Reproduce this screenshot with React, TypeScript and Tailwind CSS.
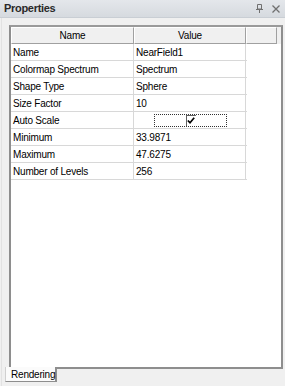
import React from "react";

const rows: [string, string][] = [
  ["Name", "NearField1"],
  ["Colormap Spectrum", "Spectrum"],
  ["Shape Type", "Sphere"],
  ["Size Factor", "10"],
  ["Auto Scale", "__check__"],
  ["Minimum", "33.9871"],
  ["Maximum", "47.6275"],
  ["Number of Levels", "256"],
];

export default function App() {
  return (
    <div
      className="w-[285px] h-[386px] bg-[#f0f0f0] flex flex-col overflow-hidden text-[10px] tracking-[-0.2px] text-black"
      style={{ fontFamily: '"Liberation Sans", Arial, sans-serif' }}
    >
      {/* title bar */}
      <div className="h-[18px] flex items-center justify-between pl-[4px] pr-[5px] bg-gradient-to-b from-[#e4e7eb] to-[#d6dadf] border-b border-[#c9ced4]">
        <span className="text-[11px] font-bold text-[#2a2a2a] tracking-[-0.3px]">Properties</span>
        <div className="flex items-center gap-[9px] text-[#707070]">
          <svg width="7" height="9" viewBox="0 0 7 9">
            <path d="M1.5 0.5h4v4.5h-4z" fill="none" stroke="#707070" strokeWidth="1" />
            <path d="M0 5.5h7M3.5 5.5v3.5" stroke="#707070" strokeWidth="1" />
          </svg>
          <svg width="8" height="8" viewBox="0 0 8 8">
            <path d="M0.5 0.5l7 7M7.5 0.5l-7 7" stroke="#707070" strokeWidth="1.3" />
          </svg>
        </div>
      </div>
      {/* body */}
      <div className="flex-1 flex flex-col pl-[1px] border-l border-[#e2e2e2] ml-[1px]">
        <div className="ml-[6px] mt-[7px] w-[274px] h-[344px] border-2 border-[#8e8e8e] border-t-[#9a9a9a] bg-white flex flex-col">
          {/* header */}
          <div className="flex h-[17px] bg-[#f0f0f0]">
            <div className="w-[123px] flex items-center justify-center border-t border-l border-white border-r border-b border-r-[#a0a0a0] border-b-[#a0a0a0]">
              Name
            </div>
            <div className="w-[112px] flex items-center justify-center border-t border-l border-white border-r border-b border-r-[#a0a0a0] border-b-[#a0a0a0]">
              Value
            </div>
            <div className="w-[31px] border-t border-l border-white border-r border-b border-r-[#a0a0a0] border-b-[#a0a0a0]" />
          </div>
          {/* rows */}
          <div className="flex flex-col w-[236px]">
            {rows.map(([k, v]) => (
              <div key={k} className="flex h-[17px] border-b border-[#d8d8d8]">
                <div className="w-[123px] pl-[2px] flex items-center border-r border-[#d8d8d8] whitespace-nowrap">
                  {k}
                </div>
                <div className="w-[112px] pl-[2px] flex items-center border-r border-[#d8d8d8] whitespace-nowrap">
                  {v === "__check__" ? (
                    <div className="ml-[18px] w-[73px] h-[13px] border border-dotted border-[#333] flex items-center justify-center">
                      <div className="w-[10px] h-[11px] border-l border-t border-[#606060] bg-white flex items-center justify-center">
                        <svg width="8" height="7" viewBox="0 0 8 7">
                          <path d="M0.8 3.5l2.2 2.2 4.2-5" fill="none" stroke="#000" strokeWidth="1.7" />
                        </svg>
                      </div>
                    </div>
                  ) : (
                    v
                  )}
                </div>
              </div>
            ))}
          </div>
        </div>
        {/* tab */}
        <div className="ml-[2px] flex">
          <div className="-mt-[2px] w-[52px] h-[15px] bg-[#fbfbfb] border-l border-[#d0d0d0] border-r-2 border-r-[#8e8e8e] border-b border-b-[#8e8e8e] flex items-center pl-[5px] pt-[1px] leading-none">
            Rendering
          </div>
        </div>
      </div>
    </div>
  );
}
